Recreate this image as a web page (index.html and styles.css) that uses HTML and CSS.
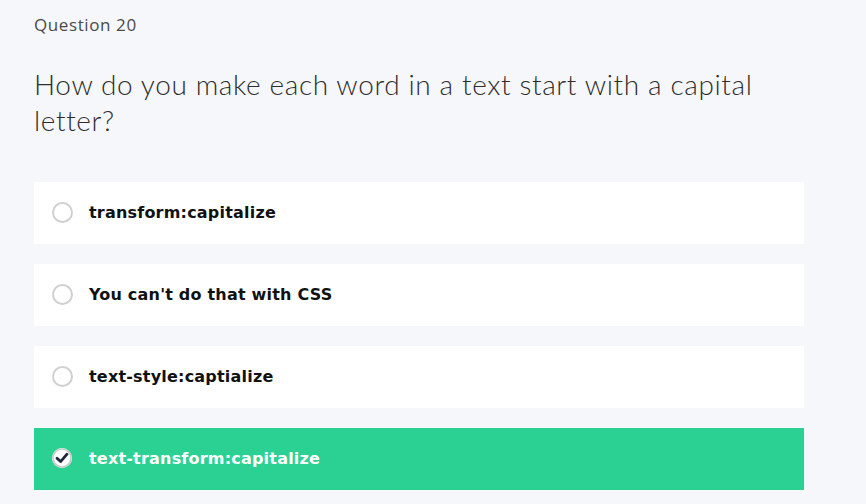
FILE: index.html
```html
<!DOCTYPE html>
<html>
<head>
<meta charset="utf-8">
<link rel="stylesheet" href="styles.css">
</head>
<body>
<div class="page">
  <div class="label">Question 20</div>
  <h1 class="question">How do you make each word in a text start with a capital letter?</h1>
  <div class="options">
    <div class="option"><span class="radio"></span><span class="text">transform:capitalize</span></div>
    <div class="option"><span class="radio"></span><span class="text">You can't do that with CSS</span></div>
    <div class="option"><span class="radio"></span><span class="text">text-style:captialize</span></div>
    <div class="option selected"><span class="radio checked"><svg viewBox="0 0 20 20" width="20" height="20"><circle cx="10" cy="10" r="9" fill="#fff" stroke="#c9c9c9" stroke-width="1.5"/><path d="M5 10.2 L8.6 13.6 L15 6.2" fill="none" stroke="#1f2540" stroke-width="2.8" stroke-linecap="round" stroke-linejoin="round"/></svg></span><span class="text">text-transform:capitalize</span></div>
  </div>
</div>
</body>
</html>
```
FILE: styles.css
```css
html, body { margin: 0; padding: 0; background: #f6f7fb; }
.page { padding: 14px 62px 0 34px; font-family: "Open Sans", sans-serif; }
.label { font-size: 17px; color: #4a4a4a; line-height: 22px; letter-spacing: 0.6px; }
.question {
  margin: 30px 0 0 0;
  font-family: "Lato", sans-serif;
  font-weight: 300;
  font-size: 28px;
  line-height: 36px;
  color: #2e2e2e;
  width: 760px;
  letter-spacing: 0.62px;
}
.options { margin-top: 44px; display: flex; flex-direction: column; gap: 20px; width: 770px; }
.option {
  height: 62px; background: #fff; display: flex; align-items: center;
  padding-left: 18px; box-sizing: border-box;
}
.radio {
  width: 17px; height: 17px; border: 2px solid #d0d0d0; border-radius: 50%;
  background: #fff; flex: none; margin-right: 16px; margin-top: -2px;
}
.radio.checked { border: none; width: 20px; height: 20px; margin-left: 0; margin-right: 17px; display: flex; }
.text { font-family: "DejaVu Sans", sans-serif; font-weight: bold; font-size: 16px; color: #111; letter-spacing: 0.2px; margin-top: -2px; }
.option.selected { background: #2bd193; }
.option.selected .text { color: #fff; }
```
